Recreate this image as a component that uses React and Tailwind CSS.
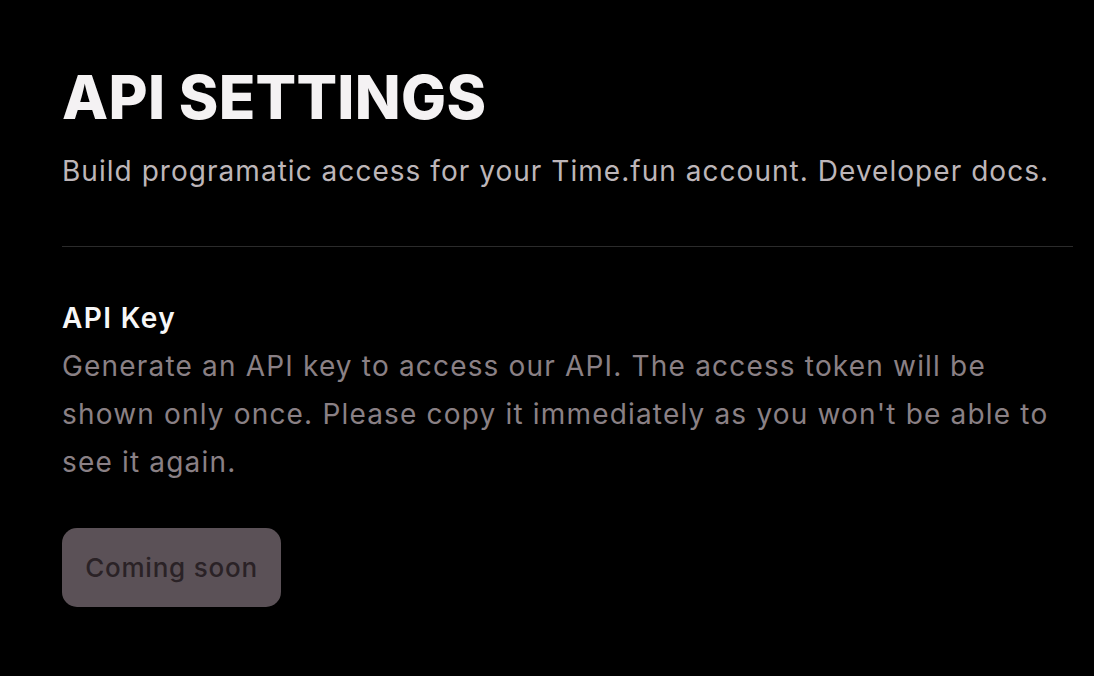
export default function App() {
  return (
    <div
      className="min-h-screen w-full bg-black text-white"
      style={{ fontFamily: "Inter, 'Liberation Sans', sans-serif" }}
    >
      <div className="pl-[62px] pr-[21px] pt-[67px]">
        <h1 className="text-[60px] font-extrabold uppercase leading-[60px] tracking-[0.3px] text-[#f4f2f3]">
          API Settings
        </h1>
        <p className="mt-[26px] text-[28px] leading-[36px] tracking-[0.037em] text-[#bdb6b9]">
          Build programatic access for your Time.fun account. Developer docs.
        </p>
        <div className="mt-[57px] h-px w-full bg-[#2b2b2b]" />
        <div className="mt-[53px]">
          <h2 className="text-[28px] font-semibold leading-[36px] tracking-[0.05em] text-[#f7f7f7]">
            API Key
          </h2>
          <p className="mt-[6px] max-w-[1005px] text-[28px] leading-[48px] tracking-[0.042em] text-[#8a8085]">
            Generate an API key to access our API. The access token will be shown only once.
            Please copy it immediately as you won't be able to see it again.
          </p>
          <button
            type="button"
            disabled
            className="mt-[42px] flex h-[79px] w-[219px] items-center justify-center rounded-[15px] bg-[#5b5157] text-[26px] font-medium tracking-[0.03em] text-[#2a2226]"
          >
            Coming soon
          </button>
        </div>
      </div>
    </div>
  )
}
